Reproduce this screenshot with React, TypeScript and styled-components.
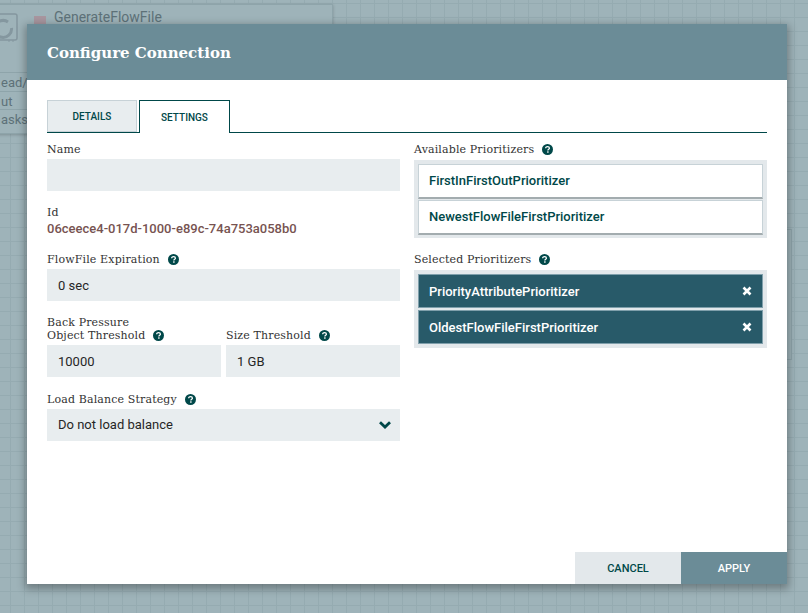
import React from 'react';
import styled, { createGlobalStyle } from 'styled-components';

const GlobalStyle = createGlobalStyle`
    html, body {
        margin: 0;
        padding: 0;
        height: 100%;
        overflow: hidden;
    }
    #root {
        height: 100%;
    }
`;

const Canvas = styled.div`
    position: relative;
    width: 808px;
    height: 613px;
    overflow: hidden;
    background-color: #9eb3b9;
    background-image:
        linear-gradient(#95abb1 1px, transparent 1px),
        linear-gradient(90deg, #95abb1 1px, transparent 1px);
    background-size: 14px 14px;
    background-position: 10px 3px;
    font-family: Roboto, sans-serif;
`;

const ProcessorCard = styled.div`
    position: absolute;
    left: -20px;
    top: 4px;
    width: 351px;
    height: 128px;
    background: #9eb3b9;
    border: 1px solid #8ea4aa;
    box-shadow: 0 1px 3px rgba(0, 0, 0, 0.2);
    color: #5d7178;
`;

const SideCard = styled.div`
    position: absolute;
    left: 700px;
    top: 229px;
    width: 90px;
    height: 129px;
    background: #9eb3b9;
    border: 1px solid #8ea4aa;
`;

const ProcessorIcon = styled.svg`
    position: absolute;
    left: 6px;
    top: 8px;
`;

const ProcessorBadge = styled.div`
    position: absolute;
    left: 53px;
    top: 11px;
    width: 12px;
    height: 12px;
    background: #a8969f;
`;

const ProcessorName = styled.div`
    position: absolute;
    left: 73px;
    top: 4px;
    font-size: 14px;
    line-height: 17px;
`;

const ProcessorStat = styled.div<{ top: number }>`
    position: absolute;
    left: 0;
    right: 0;
    top: ${p => p.top}px;
    height: 19px;
    padding-left: 20px;
    font-size: 13px;
    line-height: 19px;
    border-top: 1px solid #8ea4aa;
`;

const Dialog = styled.div`
    position: absolute;
    left: 27px;
    top: 24px;
    width: 760px;
    height: 560px;
    background: #fff;
    box-shadow: 0 3px 8px 2px rgba(0, 0, 0, 0.3);
    display: flex;
    flex-direction: column;
`;

const Header = styled.div`
    height: 56px;
    box-sizing: border-box;
    padding: 1px 0 0 20px;
    flex: none;
    display: flex;
    align-items: center;
    background: #6b8c97;
    color: #fff;
    font-family: "DejaVu Serif", serif;
    font-size: 15px;
    font-weight: bold;
`;

const Body = styled.div`
    flex: 1;
    padding: 20px 20px 0;
`;

const Tabs = styled.div`
    display: flex;
    align-items: flex-start;
    gap: 2px;
    height: 33px;
    box-sizing: border-box;
    border-bottom: 1px solid #004849;
`;

const Tab = styled.div<{ active?: boolean }>`
    width: ${p => (p.active ? 91 : 90)}px;
    height: ${p => (p.active ? 33 : 32)}px;
    box-sizing: border-box;
    padding-top: 1px;
    display: flex;
    align-items: center;
    justify-content: center;
    font-size: 10px;
    font-weight: 500;
    color: #004849;
    background: ${p => (p.active ? '#fff' : '#e8edef')};
    border: 1px solid ${p => (p.active ? '#004849' : '#c7d2d7')};
    border-bottom: ${p => (p.active ? 'none' : '1px solid #c7d2d7')};
`;

const Columns = styled.div`
    display: grid;
    grid-template-columns: 353px 353px;
    column-gap: 14px;
    margin-top: 9px;
`;

const Column = styled.div`
    display: flex;
    flex-direction: column;
`;

const Label = styled.div`
    display: flex;
    align-items: center;
    gap: 8px;
    height: 14px;
    font-family: "DejaVu Serif", serif;
    font-size: 11px;
    letter-spacing: 0.14px;
    line-height: 14px;
    white-space: nowrap;
    color: #333;

    span {
        position: relative;
        top: 1px;
    }
`;

const PressureLabel = styled(Label)`
    height: 13px;
`;

const Field = styled.div<{ gap?: number }>`
    margin-bottom: ${p => p.gap ?? 0}px;
`;

const Input = styled.div`
    height: 32px;
    margin-top: 3px;
    box-sizing: border-box;
    padding: 0 11px;
    display: flex;
    align-items: center;
    justify-content: space-between;
    background: #e8edef;
    font-size: 13px;
    color: #262626;
`;

const Select = styled(Input)`
    padding-bottom: 1px;
`;

const IdValue = styled.div`
    margin-top: 3px;
    font-size: 13px;
    font-weight: 500;
    line-height: 14px;
    color: #775351;
`;

const Thresholds = styled.div`
    display: grid;
    grid-template-columns: 174px 174px;
    column-gap: 5px;
`;

const Help = styled.svg`
    width: 11px;
    height: 11px;
    flex: none;
`;

const List = styled.div<{ selected?: boolean }>`
    margin-top: 4px;
    padding: 4px 4px ${p => (p.selected ? 4 : 3)}px;
    display: flex;
    flex-direction: column;
    gap: ${p => (p.selected ? 2 : 1)}px;
    background: #e3e8eb;
`;

const Item = styled.div<{ selected?: boolean }>`
    height: ${p => (p.selected ? 34 : 35)}px;
    box-sizing: border-box;
    padding: 0 11px ${p => (p.selected ? 0 : 1)}px 10px;
    display: flex;
    align-items: center;
    justify-content: space-between;
    font-size: 13px;
    font-weight: 500;
    color: ${p => (p.selected ? '#fff' : '#004849')};
    background: ${p => (p.selected ? '#285a69' : '#fff')};
    border: 1px solid ${p => (p.selected ? '#7f9fab' : '#c7d2d7')};
    border-bottom: ${p => (p.selected ? '1px solid #7f9fab' : '2px solid #a3acaf')};

    svg {
        margin-right: -1px;
    }
`;

const Spacer = styled.div`
    height: 14px;
`;

const Footer = styled.div`
    display: flex;
    justify-content: flex-end;
    flex: none;
`;

const Button = styled.div<{ primary?: boolean }>`
    width: 106px;
    height: 32px;
    display: flex;
    align-items: center;
    justify-content: center;
    font-size: 11px;
    font-weight: 500;
    color: ${p => (p.primary ? '#fff' : '#004849')};
    background: ${p => (p.primary ? '#6b8c97' : '#e3e8eb')};
`;

const Chevron = styled.svg`
    margin-right: -2px;
`;

const HelpIcon = () => (
    <Help viewBox="0 0 12 12">
        <circle cx="6" cy="6" r="6" fill="#004849" />
        <path d="M4 4.7 C4 3.4 5 2.8 6.1 2.8 C7.3 2.8 8.1 3.5 8.1 4.5 C8.1 5.7 6.4 5.8 6.4 7" fill="none" stroke="#fff" strokeWidth="1.4" />
        <rect x="5.6" y="8" width="1.6" height="1.5" fill="#fff" />
    </Help>
);

const RemoveIcon = () => (
    <svg width="10" height="10" viewBox="0 0 10 10">
        <path d="M1.5 1.5 L8.5 8.5 M8.5 1.5 L1.5 8.5" stroke="#fff" strokeWidth="2.6" />
    </svg>
);

const ChevronIcon = () => (
    <Chevron width="12" height="8" viewBox="0 0 12 8">
        <path d="M1 1.2 L6 6 L11 1.2" fill="none" stroke="#004849" strokeWidth="2.8" />
    </Chevron>
);

export default function App() {
    return (
        <Canvas>
            <GlobalStyle />
            <ProcessorCard>
                <ProcessorIcon width="32" height="30" viewBox="0 0 32 30">
                    <rect x="-8" y="1" width="38" height="26" rx="2" fill="none" stroke="#84979f" strokeWidth="1.5" />
                    <path d="M22 29 v-2 M26 29 v-2" stroke="#84979f" />
                    <path d="M21 9 A 8.5 8.5 0 1 0 24.5 15" fill="none" stroke="#84979f" strokeWidth="3" />
                </ProcessorIcon>
                <ProcessorBadge />
                <ProcessorName>GenerateFlowFile</ProcessorName>
                <ProcessorStat top={67}>ead/W</ProcessorStat>
                <ProcessorStat top={86}>ut</ProcessorStat>
                <ProcessorStat top={104}>asks/T</ProcessorStat>
            </ProcessorCard>
            <SideCard />
            <Dialog>
                <Header>Configure Connection</Header>
                <Body>
                    <Tabs>
                        <Tab>DETAILS</Tab>
                        <Tab active>SETTINGS</Tab>
                    </Tabs>
                    <Columns>
                        <Column>
                            <Field gap={14}>
                                <Label><span>Name</span></Label>
                                <Input />
                            </Field>
                            <Field gap={16}>
                                <Label><span>Id</span></Label>
                                <IdValue>06ceece4-017d-1000-e89c-74a753a058b0</IdValue>
                            </Field>
                            <Field gap={14}>
                                <Label><span>FlowFile Expiration</span> <HelpIcon /></Label>
                                <Input>0 sec</Input>
                            </Field>
                            <PressureLabel><span>Back Pressure</span></PressureLabel>
                            <Thresholds>
                                <Field gap={15}>
                                    <Label><span>Object Threshold</span> <HelpIcon /></Label>
                                    <Input>10000</Input>
                                </Field>
                                <Field gap={15}>
                                    <Label><span>Size Threshold</span> <HelpIcon /></Label>
                                    <Input>1 GB</Input>
                                </Field>
                            </Thresholds>
                            <Field>
                                <Label><span>Load Balance Strategy</span> <HelpIcon /></Label>
                                <Select>Do not load balance <ChevronIcon /></Select>
                            </Field>
                        </Column>
                        <Column>
                            <Label><span>Available Prioritizers</span> <HelpIcon /></Label>
                            <List>
                                <Item>FirstInFirstOutPrioritizer</Item>
                                <Item>NewestFlowFileFirstPrioritizer</Item>
                            </List>
                            <Spacer />
                            <Label><span>Selected Prioritizers</span> <HelpIcon /></Label>
                            <List selected>
                                <Item selected>PriorityAttributePrioritizer <RemoveIcon /></Item>
                                <Item selected>OldestFlowFileFirstPrioritizer <RemoveIcon /></Item>
                            </List>
                        </Column>
                    </Columns>
                </Body>
                <Footer>
                    <Button>CANCEL</Button>
                    <Button primary>APPLY</Button>
                </Footer>
            </Dialog>
        </Canvas>
    );
}
